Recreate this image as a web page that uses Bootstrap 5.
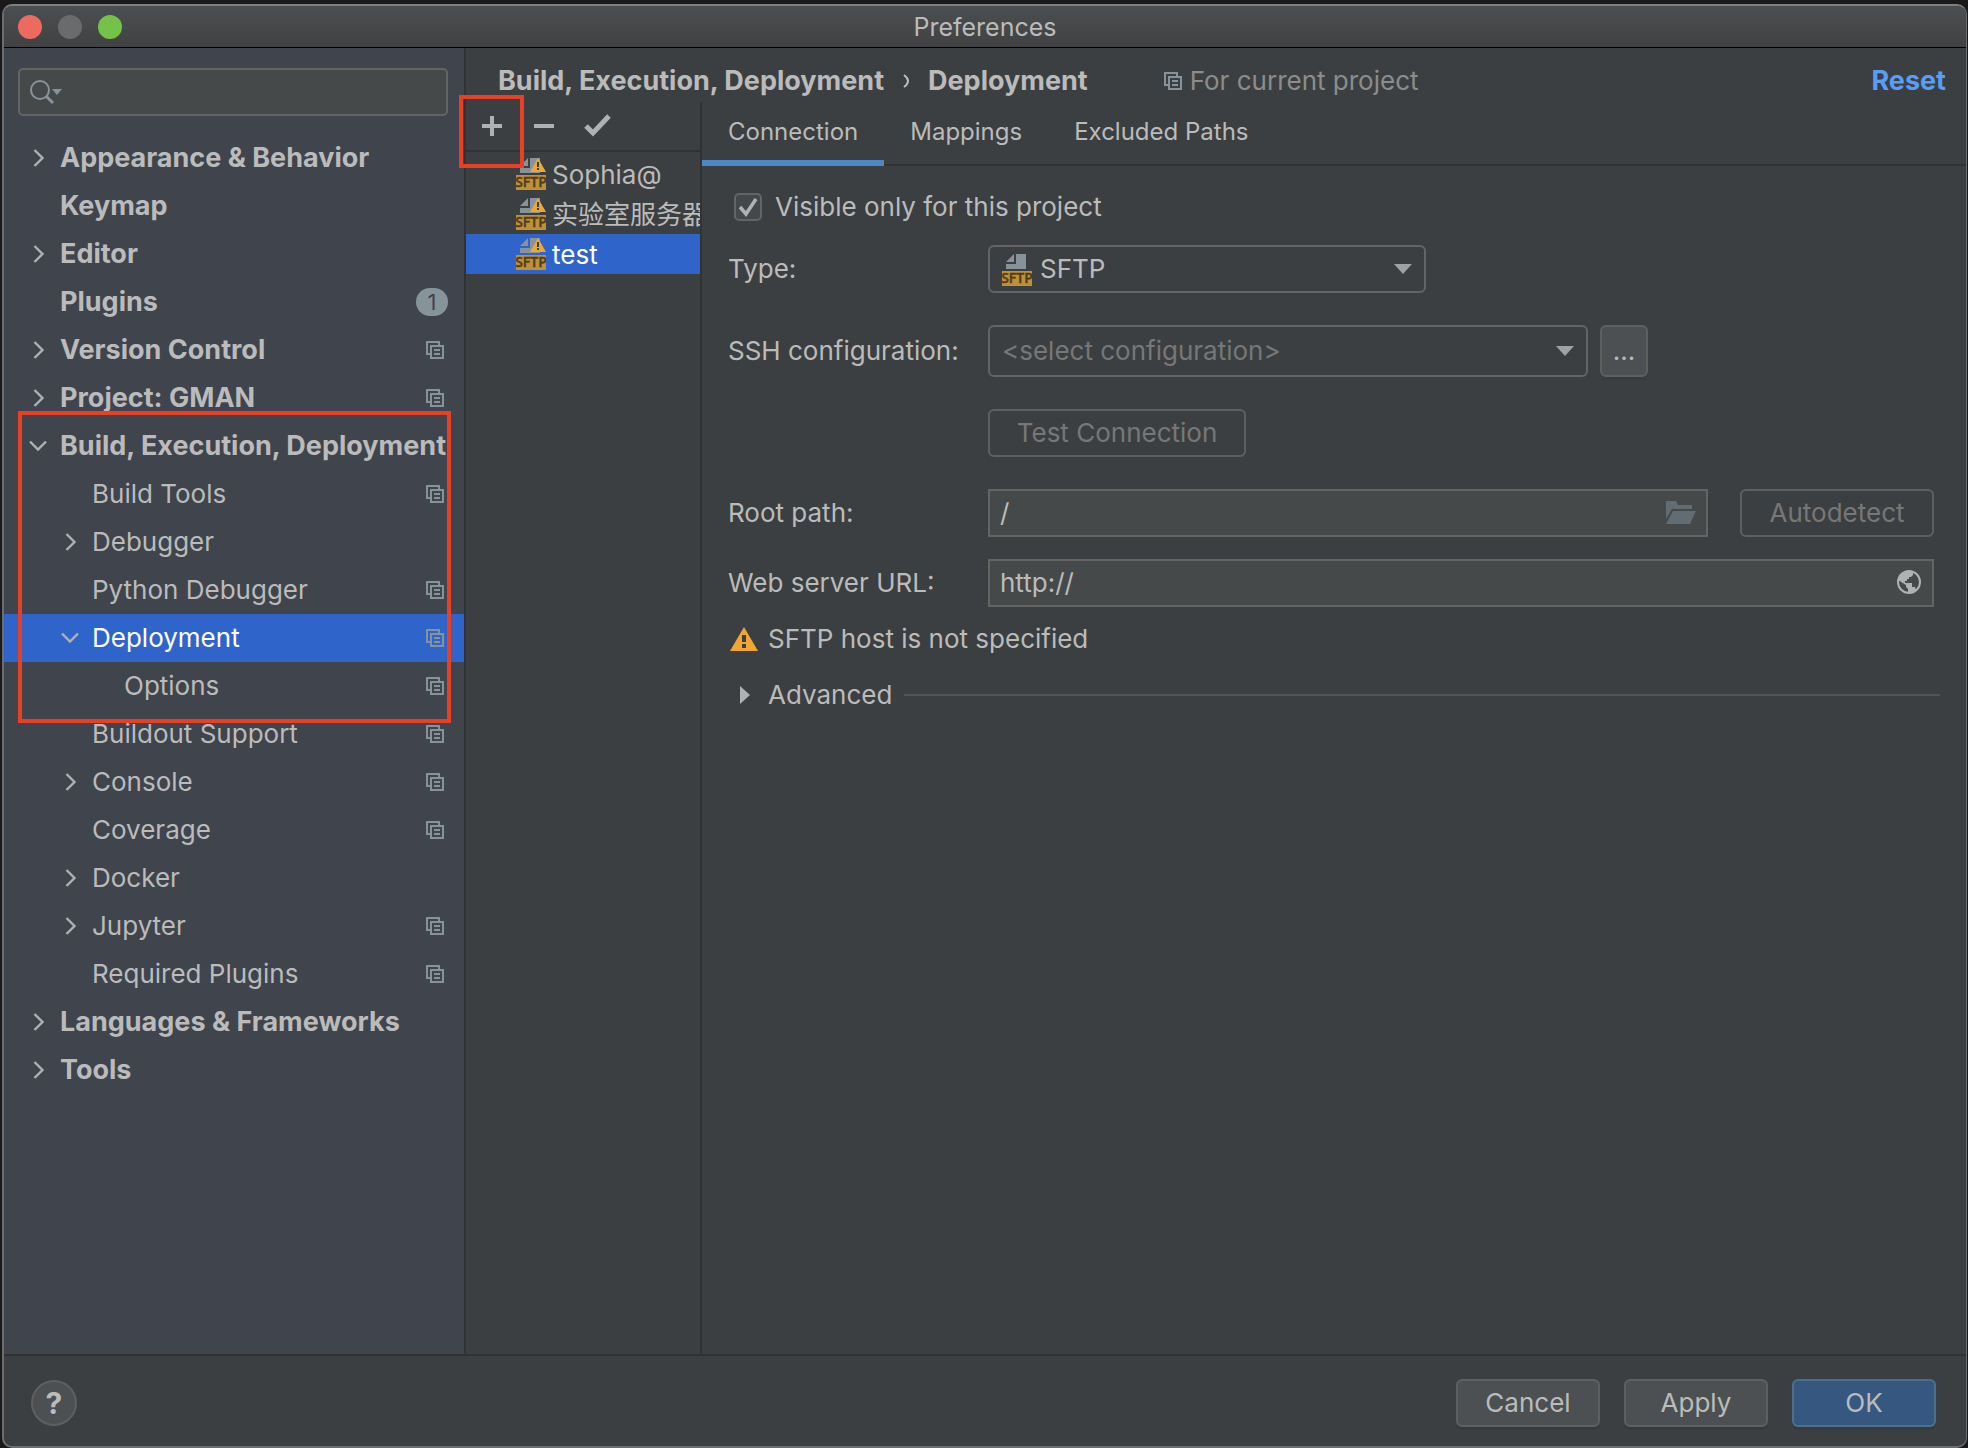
<!DOCTYPE html>
<html lang="en">
<head>
<meta charset="utf-8">
<meta name="viewport" content="width=device-width, initial-scale=1">
<title>Preferences</title>
<link href="https://cdn.jsdelivr.net/npm/bootstrap@5.3.0/dist/css/bootstrap.min.css" rel="stylesheet">
<style>
  :root {
    --pane: #3c3f41; --side: #40444d; --line: #323232; --edge: #646464;
    --field: #45494a; --ink: #bbbbbb; --dim: #777777; --pick: #2f65ca; --steel: #87939a; --alert: #e93f25;
  }
  body { background: #232325; color: var(--ink); font: 400 26px/32px Inter, "Noto Sans CJK SC", sans-serif; }
  button, input, select { font: inherit; color: inherit; }
  svg { display: block; flex: none; }
  .window { min-height: 100vh; padding: 4px 1px 0 2px; background: #1a1a1b; }
  .frame { background: var(--pane); border-radius: 10px; border: 1px solid #6b6d6f; border-width: 2px 1px 2px 2px; border-top-color: #7d8081; overflow: hidden; }
  .titlebar { height: 42px; background: linear-gradient(#4b4f51, #414143); border-bottom: 1px solid #000; }
  .title-text { font-size: 25px; }
  .lights { width: 130px; padding-left: 14px; gap: 16px; }
  .light { width: 24px; height: 24px; border-radius: 50%; border: 0; padding: 0; }
  .sidebar { width: 462px; background: var(--side); border-right: 2px solid var(--line); }
  .search { height: 48px; margin: 20px 16px 18px 14px; background: var(--field); border: 2px solid var(--edge); border-radius: 5px; padding: 0 10px; }
  .search input, .field input { background: none; border: 0; outline: 0; min-width: 0; padding: 0; }
  .tree ul { list-style: none; margin: 0; padding: 0; }
  .tree a { height: 48px; padding: 0 20px 0 24px; color: var(--ink); text-decoration: none; white-space: nowrap; }
  .tree .lvl1 { font-weight: 700; font-size: 27px; }
  .tree .lvl2 { padding-left: 56px; }
  .tree .lvl3 { padding-left: 88px; }
  .tree .active { background: var(--pick); color: #fff; }
  .twist { width: 20px; margin-right: 12px; }
  .count { width: 32px; height: 28px; margin-right: -4px; border-radius: 14px; background: var(--steel); color: #40444d; font: 400 22px/28px Inter, sans-serif; text-align: center; }
  .callout { position: absolute; border: 4px solid var(--alert); pointer-events: none; z-index: 2; }
  .callout-tree { top: -11px; left: 14px; right: 13px; height: 312px; }
  .callout-add { top: -7px; left: -7px; width: 65px; height: 73px; }
  .crumbs { height: 54px; padding: 12px 20px 0 32px; font-size: 27px; font-weight: 700; }
  .crumbs .sep { margin: 0 14px; }
  .crumbs .scope { color: #8c8c8c; font-weight: 400; font-size: 26px; margin-left: 76px; gap: 8px; }
  .crumbs a { color: #589df6; text-decoration: none; }
  .servers { width: 236px; border-right: 2px solid var(--line); }
  .tools { height: 50px; border-bottom: 2px solid var(--line); padding-left: 14px; gap: 28px; }
  .tools button, .plain { background: none; border: 0; padding: 0; }
  .server-list { margin-top: 2px; }
  .server { height: 40px; padding: 0 0 0 50px; gap: 6px; border: 0; background: none; width: 100%; white-space: nowrap; overflow: hidden; }
  .server.active { background: var(--pick); color: #fff; }
  .server span { padding-top: 2px; }
  .tabs { height: 64px; border-bottom: 2px solid var(--line); }
  .tabs button { height: 64px; padding: 2px 26px 0; background: none; border: 0; border-bottom: 6px solid transparent; font-size: 24px; }
  .tabs button.active { border-bottom-color: #4a88c7; }
  .form-area { padding: 25px 32px 0 26px; }
  .only-row { padding-left: 6px; margin-bottom: 22px; gap: 13px; }
  .tick { appearance: none; width: 28px; height: 28px; margin: 0; border: 2px solid var(--edge); border-radius: 5px; background: #43494a; display: block; }
  .lab { width: 260px; flex: none; white-space: nowrap; }
  .pick { position: relative; border: 2px solid var(--edge); border-radius: 6px; }
  .pick select { appearance: none; background: none; border: 0; outline: 0; width: 100%; height: 100%; padding: 0 50px 0 12px; }
  .pick .arrow { position: absolute; right: 12px; top: 50%; margin-top: -5px; pointer-events: none; }
  .pick .glyph { position: absolute; left: 12px; top: 7px; pointer-events: none; }
  .pick-type { width: 438px; height: 48px; }
  .pick-type select { padding-left: 50px; }
  .pick-ssh { width: 600px; height: 52px; color: var(--dim); }
  .field { height: 48px; background: var(--field); border: 2px solid var(--edge); padding: 0 10px; }
  .push { height: 48px; border: 2px solid #5e6060; border-radius: 6px; background: #4c5052; box-shadow: 0 3px 0 rgba(54,54,54,.5); padding: 0; }
  .push:disabled { background: none; color: var(--dim); box-shadow: none; }
  .push-main { background: #365880; border-color: #4c708c; }
  .w-std { width: 144px; }
  .dots { width: 48px; height: 52px; margin-left: 12px; }
  .test { width: 258px; }
  .auto { width: 194px; margin-left: 32px; }
  .url-row { margin-top: 22px; }
  .notice { margin-top: 16px; padding-left: 2px; gap: 10px; }
  .adv { margin-top: 24px; gap: 12px; padding-left: 12px; }
  .adv button { gap: 18px; }
  .rule { height: 2px; background: #515355; margin-right: -6px; }
  .foot { height: 92px; border-top: 2px solid var(--line); padding: 4px 30px 0 27px; gap: 24px; }
  .help { width: 46px; height: 46px; border-radius: 50%; border: 2px solid #5e6060; background: #4c5052; font-weight: 700; font-size: 30px; padding: 0; }
</style>
</head>
<body>
<svg class="d-none" aria-hidden="true">
  <symbol id="right" viewBox="0 0 20 20"><path d="M6.500 2 14.500 10l-8 8" fill="none" stroke="#afb1b3" stroke-width="2.400"/></symbol>
  <symbol id="down" viewBox="0 0 20 20"><path d="M2 5.500l8 8 8-8" fill="none" stroke="#afb1b3" stroke-width="2.400"/></symbol>
  <symbol id="proj" viewBox="0 0 18 18"><path d="M4 13H1V1h12v3M5 5h12v12H5zM8 9h6M8 13h6" fill="none" stroke="#87939a" stroke-width="2"/></symbol>
  <symbol id="sftp" viewBox="0 0 30 32">
    <path d="M4 8 12 0v8zM14 0h10v15H4v-5h10z" fill="#87939a"/>
    <path d="M0 17h30v15H0z" fill="#be9039"/>
    <text x="15" y="29" text-anchor="middle" font-family="Open Sans, sans-serif" font-weight="600" font-size="14" fill="#513c1a" stroke="#513c1a" stroke-width="0.400">SFTP</text>
  </symbol>
  <symbol id="mini" viewBox="0 0 16 14"><path d="M8 0l8 14H0z" fill="#f0a732"/><path d="M7 4h2v5H7zM7 10h2v2H7z" fill="#3c3f41"/></symbol>
  <symbol id="tri" viewBox="0 0 18 10"><path d="M0 0h18L9 10z" fill="#9fa2a5"/></symbol>
</svg>

<div class="window d-flex flex-column">
<div class="frame d-flex flex-column flex-fill">
  <header class="titlebar d-flex align-items-center flex-shrink-0">
    <div class="lights d-flex">
      <button class="light" style="background:#ed6a5e" aria-label="Close"></button>
      <button class="light" style="background:#6a6b6d" aria-label="Minimize"></button>
      <button class="light" style="background:#74c248" aria-label="Zoom"></button>
    </div>
    <div class="flex-fill text-center title-text">Preferences</div>
    <div class="lights"></div>
  </header>

  <div class="d-flex flex-fill">
    <aside class="sidebar flex-shrink-0">
      <div class="search d-flex align-items-center">
        <svg width="34" height="26" viewBox="0 0 34 26"><circle cx="10" cy="11" r="9" fill="none" stroke="#87939a" stroke-width="2"/><path d="M16 17l7 7" stroke="#87939a" stroke-width="3"/><path d="M22 10h10l-5 6z" fill="#87939a"/></svg>
        <input type="search" class="flex-fill" aria-label="Search settings">
      </div>
      <nav class="tree">
        <ul>
          <li><a href="#" class="lvl1 d-flex align-items-center"><svg class="twist" width="20" height="20"><use href="#right"/></svg><span class="flex-fill">Appearance &amp; Behavior</span></a></li>
          <li><a href="#" class="lvl1 d-flex align-items-center"><span class="twist"></span><span class="flex-fill">Keymap</span></a></li>
          <li><a href="#" class="lvl1 d-flex align-items-center"><svg class="twist" width="20" height="20"><use href="#right"/></svg><span class="flex-fill">Editor</span></a></li>
          <li><a href="#" class="lvl1 d-flex align-items-center"><span class="twist"></span><span class="flex-fill">Plugins</span><span class="count">1</span></a></li>
          <li><a href="#" class="lvl1 d-flex align-items-center"><svg class="twist" width="20" height="20"><use href="#right"/></svg><span class="flex-fill">Version Control</span><svg width="18" height="18"><use href="#proj"/></svg></a></li>
          <li><a href="#" class="lvl1 d-flex align-items-center"><svg class="twist" width="20" height="20"><use href="#right"/></svg><span class="flex-fill">Project: GMAN</span><svg width="18" height="18"><use href="#proj"/></svg></a></li>
          <li class="position-relative">
            <a href="#" class="lvl1 d-flex align-items-center"><svg class="twist" width="20" height="20"><use href="#down"/></svg><span>Build, Execution, Deployment</span></a>
            <div class="callout callout-tree"></div>
            <ul>
              <li><a href="#" class="lvl2 d-flex align-items-center"><span class="twist"></span><span class="flex-fill">Build Tools</span><svg width="18" height="18"><use href="#proj"/></svg></a></li>
              <li><a href="#" class="lvl2 d-flex align-items-center"><svg class="twist" width="20" height="20"><use href="#right"/></svg><span class="flex-fill">Debugger</span></a></li>
              <li><a href="#" class="lvl2 d-flex align-items-center"><span class="twist"></span><span class="flex-fill">Python Debugger</span><svg width="18" height="18"><use href="#proj"/></svg></a></li>
              <li><a href="#" class="lvl2 active d-flex align-items-center"><svg class="twist" width="20" height="20"><use href="#down"/></svg><span class="flex-fill">Deployment</span><svg width="18" height="18"><use href="#proj"/></svg></a></li>
              <li><a href="#" class="lvl3 d-flex align-items-center"><span class="twist"></span><span class="flex-fill">Options</span><svg width="18" height="18"><use href="#proj"/></svg></a></li>
              <li><a href="#" class="lvl2 d-flex align-items-center"><span class="twist"></span><span class="flex-fill">Buildout Support</span><svg width="18" height="18"><use href="#proj"/></svg></a></li>
              <li><a href="#" class="lvl2 d-flex align-items-center"><svg class="twist" width="20" height="20"><use href="#right"/></svg><span class="flex-fill">Console</span><svg width="18" height="18"><use href="#proj"/></svg></a></li>
              <li><a href="#" class="lvl2 d-flex align-items-center"><span class="twist"></span><span class="flex-fill">Coverage</span><svg width="18" height="18"><use href="#proj"/></svg></a></li>
              <li><a href="#" class="lvl2 d-flex align-items-center"><svg class="twist" width="20" height="20"><use href="#right"/></svg><span class="flex-fill">Docker</span></a></li>
              <li><a href="#" class="lvl2 d-flex align-items-center"><svg class="twist" width="20" height="20"><use href="#right"/></svg><span class="flex-fill">Jupyter</span><svg width="18" height="18"><use href="#proj"/></svg></a></li>
              <li><a href="#" class="lvl2 d-flex align-items-center"><span class="twist"></span><span class="flex-fill">Required Plugins</span><svg width="18" height="18"><use href="#proj"/></svg></a></li>
            </ul>
          </li>
          <li><a href="#" class="lvl1 d-flex align-items-center"><svg class="twist" width="20" height="20"><use href="#right"/></svg><span class="flex-fill">Languages &amp; Frameworks</span></a></li>
          <li><a href="#" class="lvl1 d-flex align-items-center"><svg class="twist" width="20" height="20"><use href="#right"/></svg><span class="flex-fill">Tools</span></a></li>
        </ul>
      </nav>
    </aside>

    <main class="d-flex flex-column flex-fill">
      <div class="crumbs d-flex align-items-center">
        <span>Build, Execution, Deployment</span>
        <svg class="sep" width="16" height="20" viewBox="0 0 16 20"><path d="M6 4q4 3 4 6t-4 6" fill="none" stroke="#bbb" stroke-width="2"/></svg>
        <span>Deployment</span>
        <span class="scope d-flex align-items-center"><svg width="18" height="18"><use href="#proj"/></svg>For current project</span>
        <a href="#" class="ms-auto">Reset</a>
      </div>
      <div class="d-flex flex-fill">
        <section class="servers flex-shrink-0">
          <div class="tools d-flex align-items-center position-relative">
            <button aria-label="Add"><svg width="24" height="24" viewBox="0 0 24 24"><path d="M12 2v20M2 12h20" stroke="#afb1b3" stroke-width="4"/></svg></button>
            <button aria-label="Remove"><svg width="24" height="24" viewBox="0 0 24 24"><path d="M2 12h20" stroke="#afb1b3" stroke-width="4"/></svg></button>
            <button aria-label="Use as default"><svg width="28" height="24" viewBox="0 0 28 24"><path d="M2 12l7 7L25 2" fill="none" stroke="#afb1b3" stroke-width="5"/></svg></button>
            <div class="callout callout-add"></div>
          </div>
          <div class="server-list">
            <button class="server d-flex align-items-center"><svg width="30" height="32"><use href="#sftp"/><use href="#mini" x="14" width="16" height="14"/></svg><span>Sophia@</span></button>
            <button class="server d-flex align-items-center"><svg width="30" height="32"><use href="#sftp"/><use href="#mini" x="14" width="16" height="14"/></svg><span>实验室服务器</span></button>
            <button class="server active d-flex align-items-center"><svg width="30" height="32"><use href="#sftp"/><use href="#mini" x="14" width="16" height="14"/></svg><span>test</span></button>
          </div>
        </section>

        <section class="flex-fill">
          <div class="tabs d-flex" role="tablist">
            <button role="tab" class="active" aria-selected="true">Connection</button>
            <button role="tab">Mappings</button>
            <button role="tab">Excluded Paths</button>
          </div>
          <form class="form-area d-flex flex-column">
            <div class="d-flex align-items-center only-row">
              <div class="position-relative">
                <input type="checkbox" class="tick" id="only" checked>
                <svg class="position-absolute top-0 start-0 pe-none" width="28" height="28" viewBox="0 0 28 28"><path d="M6 14l6 7L22 6" fill="none" stroke="#afb1b3" stroke-width="3.500"/></svg>
              </div>
              <label for="only">Visible only for this project</label>
            </div>
            <div class="d-flex align-items-center">
              <label class="lab" for="type">Type:</label>
              <div class="pick pick-type">
                <svg class="glyph" width="30" height="32"><use href="#sftp"/></svg>
                <select id="type"><option>SFTP</option></select>
                <svg class="arrow" width="18" height="10"><use href="#tri"/></svg>
              </div>
            </div>
            <div class="d-flex align-items-center mt-4 pt-2">
              <label class="lab" for="ssh">SSH configuration:</label>
              <div class="pick pick-ssh">
                <select id="ssh"><option>&lt;select configuration&gt;</option></select>
                <svg class="arrow" width="18" height="10"><use href="#tri"/></svg>
              </div>
              <button type="button" class="push dots" aria-label="Browse">...</button>
            </div>
            <div class="d-flex mt-4 pt-2">
              <span class="lab"></span>
              <button type="button" class="push test" disabled>Test Connection</button>
            </div>
            <div class="d-flex align-items-center mt-4 pt-2">
              <label class="lab" for="root">Root path:</label>
              <div class="field d-flex align-items-center flex-fill">
                <input type="text" id="root" class="flex-fill" value="/">
                <svg width="30" height="24" viewBox="0 0 30 24"><path d="M0 0h10l2 4h14v4H6L0 18zM7 10h23l-6 13H0z" fill="#626d73"/></svg>
              </div>
              <button type="button" class="push auto" disabled>Autodetect</button>
            </div>
            <div class="d-flex align-items-center url-row">
              <label class="lab" for="url">Web server URL:</label>
              <div class="field d-flex align-items-center flex-fill">
                <input type="text" id="url" class="flex-fill" value="http://">
                <svg width="26" height="26" viewBox="0 0 26 26"><circle cx="13" cy="12" r="11" fill="none" stroke="#afb1b3" stroke-width="2"/><path d="M17 2v3l-2 2h-2v2h-2v2H9v2h7v4h3l1 3q-3 3-8 3v-4l-2-2v-2L2 10Q4 2 12 1z" fill="#afb1b3"/></svg>
              </div>
            </div>
            <div class="d-flex align-items-center notice">
              <svg width="28" height="24" viewBox="0 0 28 24"><path d="M14 0l14 24H0z" fill="#f0a732"/><path d="M12 8h4v7h-4zM12 17h4v4h-4z" fill="#3c3f41"/></svg>
              <span>SFTP host is not specified</span>
            </div>
            <div class="d-flex align-items-center adv">
              <button type="button" class="plain d-flex align-items-center"><svg width="10" height="18" viewBox="0 0 10 18"><path d="M0 0l10 9-10 9z" fill="#afb1b3"/></svg><span>Advanced</span></button>
              <div class="rule flex-fill"></div>
            </div>
          </form>
        </section>
      </div>
    </main>
  </div>

  <footer class="foot d-flex align-items-center flex-shrink-0">
    <button class="help me-auto" aria-label="Help">?</button>
    <button class="push w-std">Cancel</button>
    <button class="push w-std">Apply</button>
    <button class="push push-main w-std">OK</button>
  </footer>
</div>
</div>
<script src="https://cdn.jsdelivr.net/npm/bootstrap@5.3.0/dist/js/bootstrap.bundle.min.js"></script>
</body>
</html>
